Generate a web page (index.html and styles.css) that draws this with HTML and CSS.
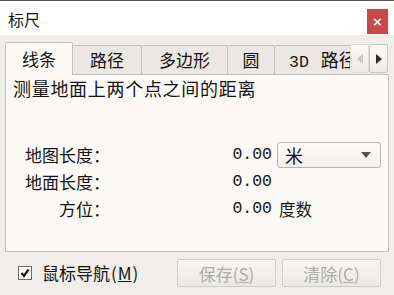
FILE: index.html
```html
<!DOCTYPE html>
<html lang="zh-CN">
<head>
  <meta charset="UTF-8">
  <title>标尺</title>
  <link rel="stylesheet" href="styles.css">
</head>
<body>
  <div class="dialog">
    <div class="titlebar">
      <span class="title">标尺</span>
      <button class="close">&#215;</button>
    </div>

    <div class="tabbar">
      <div class="tabs">
        <div class="tab active" style="width: 68px">线条</div>
        <div class="tab" style="width: 69px">路径</div>
        <div class="tab" style="width: 86px">多边形</div>
        <div class="tab" style="width: 47px">圆</div>
        <div class="tab clipped" style="width: 90px"><span class="mono">3D</span>路径</div>
      </div>
      <div class="scroll">
        <button class="arrow off">
          <svg width="6" height="10" viewBox="0 0 6 10"><path d="M6 0 L0 5 L6 10 Z" fill="#c9c7c3"/></svg>
        </button>
        <button class="arrow">
          <svg width="6" height="10" viewBox="0 0 6 10"><path d="M0 0 L6 5 L0 10 Z" fill="#2b2b2b"/></svg>
        </button>
      </div>
    </div>

    <div class="panel">
      <div class="desc">测量地面上两个点之间的距离</div>
      <div class="fields">
        <div class="label">地图长度：</div>
        <div class="value num">0.00</div>
        <div class="select">
          <span>米</span>
          <svg width="10" height="6" viewBox="0 0 10 6"><path d="M0 0 L10 0 L5 6 Z" fill="#555"/></svg>
        </div>

        <div class="label">地面长度：</div>
        <div class="value num">0.00</div>
        <div></div>

        <div class="label">方位：</div>
        <div class="value num">0.00</div>
        <div class="unit">度数</div>
      </div>
    </div>

    <div class="footer">
      <label class="check">
        <svg width="14" height="14" viewBox="0 0 14 14">
          <rect x="0.5" y="0.5" width="13" height="13" fill="#fff" stroke="#6d6b68"/>
          <path d="M3.5 7 L6 10 L10.5 3.5" fill="none" stroke="#111" stroke-width="2.2"/>
        </svg>
        <span>鼠标导航<span class="paren">(</span><u>M</u><span class="paren">)</span></span>
      </label>
      <div class="buttons">
        <button class="btn" disabled>保存(<u>S</u>)</button>
        <button class="btn" disabled>清除(<u>C</u>)</button>
      </div>
    </div>
  </div>
</body>
</html>
```

FILE: styles.css
```css
/* dialog */
body {
  margin: 0;
  background: #f0eeeb;
  font-family: "Noto Sans CJK SC", "Noto Sans", sans-serif;
  color: #141414;
}

.dialog {
  width: 394px;
  height: 295px;
  overflow: hidden;
}

.titlebar {
  box-sizing: border-box;
  height: 35px;
  background: #fff;
  border-top: 1px solid #5a5a5a;
  display: flex;
  align-items: flex-start;
  justify-content: space-between;
}

.title {
  font-size: 16px;
  line-height: 20px;
  margin: 8px 0 0 8px;
}

.close {
  width: 21px;
  height: 25px;
  margin: 8px 6px 0 0;
  border: none;
  padding: 0;
  background: #c8494a;
  color: #fff;
  font-family: "DejaVu Sans", sans-serif;
  font-size: 13px;
  font-weight: bold;
}

/* tabs */
.tabbar {
  display: flex;
  align-items: flex-end;
  height: 32px;
  margin: 8px 6px -1px 5px;
  position: relative;
  z-index: 1;
}

.tabs {
  display: flex;
  align-items: flex-end;
  width: 345px;
  height: 33px;
  overflow: hidden;
}

.tab {
  box-sizing: border-box;
  flex-shrink: 0;
  height: 30px;
  background: #ebe8e4;
  border: 1px solid #c4c2be;
  border-left: none;
  border-radius: 2px 2px 0 0;
  font-size: 17px;
  line-height: 27px;
  text-align: center;
  white-space: nowrap;
}

.tab.active {
  height: 33px;
  background: #fcfaf7;
  border-left: 1px solid #c4c2be;
  border-bottom: none;
  line-height: 31px;
}

.tab.clipped {
  text-align: left;
  padding-left: 14px;
  font-size: 18px;
}

.mono {
  font-family: "Liberation Mono", monospace;
  font-size: 16.5px;
  margin-right: 12px;
}

.scroll {
  display: flex;
  margin-bottom: 2px;
}

.arrow {
  box-sizing: border-box;
  width: 19px;
  height: 29px;
  padding: 0;
  border: 1px solid #c9c7c3;
  border-radius: 2px;
  background: linear-gradient(#fbfaf9, #eceae7);
  display: flex;
  align-items: center;
  justify-content: center;
}

.arrow.off {
  border-color: #dcdad6;
}

/* panel */
.panel {
  box-sizing: border-box;
  width: 384px;
  height: 178px;
  margin-left: 5px;
  background: #fcfaf7;
  border: 1px solid #c4c2be;
}

.desc {
  font-size: 18px;
  letter-spacing: 0.7px;
  line-height: 20px;
  margin: 3px 0 0 7px;
  white-space: nowrap;
}

.fields {
  display: grid;
  grid-template-columns: 85px 157px 104px;
  grid-auto-rows: 27px;
  column-gap: 5px;
  align-items: center;
  margin: 43px 0 0 19px;
}

.label {
  font-size: 17px;
  line-height: 20px;
  text-align: right;
  white-space: nowrap;
}

.num {
  font-family: "Liberation Mono", monospace;
  font-size: 16.5px;
}

.value {
  text-align: right;
}

.unit {
  font-size: 16.5px;
  padding-left: 2px;
}

.select {
  box-sizing: border-box;
  height: 26px;
  border: 1px solid #b9b7b3;
  border-radius: 3px;
  background: linear-gradient(#fdfcfb, #f1efec);
  display: flex;
  align-items: center;
  justify-content: space-between;
  padding: 0 9px 0 7px;
  font-size: 18px;
}

/* footer */
.footer {
  display: flex;
  align-items: center;
  justify-content: space-between;
  height: 42px;
  padding: 0 13px 0 18px;
}

.check {
  display: flex;
  align-items: center;
  gap: 10px;
  font-size: 17px;
  line-height: 20px;
}

.paren {
  padding: 0 1px;
}

.buttons {
  display: flex;
  gap: 6px;
}

.btn {
  box-sizing: border-box;
  width: 99px;
  height: 28px;
  border: 1px solid #cfcdc9;
  border-radius: 2px;
  background: linear-gradient(#f7f6f4, #ebe9e6);
  color: #aeaca9;
  font-family: "Noto Sans CJK SC", sans-serif;
  font-size: 17px;
  padding: 0;
}
```
